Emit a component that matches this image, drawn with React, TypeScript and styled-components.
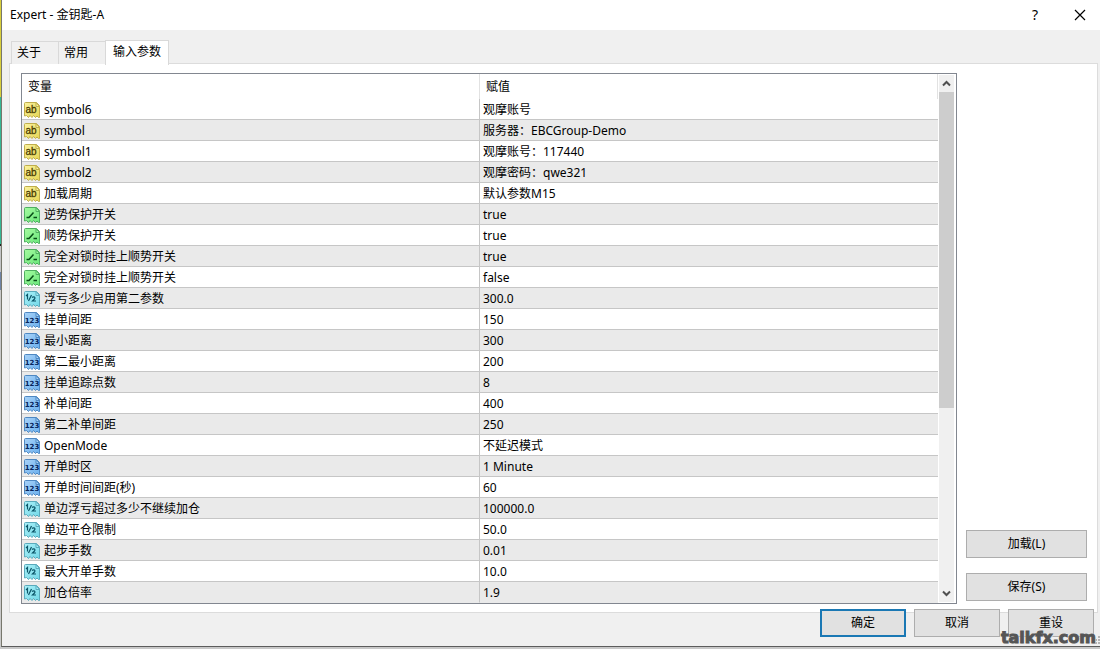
import React from 'react';
import styled, { createGlobalStyle, css } from 'styled-components';

const GlobalStyle = createGlobalStyle`
  *, *::before, *::after { box-sizing: border-box; }
  body {
    margin: 0;
    background: #c8c8c8;
    color: #000;
    font: 12px/16px "Noto Sans", "Noto Sans CJK SC", sans-serif;
  }
  button { font: inherit; color: inherit; padding: 0; margin: 0; }
`;

const Screen = styled.div`
  display: flex;
  padding-bottom: 2px;
  overflow: hidden;
`;

const DesktopEdge = styled.div`
  flex: none;
  width: 1px;
  background: linear-gradient(#d9cf3c 0 97px, #35b795 97px 244px, #222 244px 246px, #c3c4c6 246px 272px, #6f83a6 272px 290px, #c9c9c9 290px 430px, #a8a8a8 430px 570px, #c9c9c9 570px);
`;

const Dialog = styled.main`
  position: relative;
  flex: 1;
  min-width: 0;
  background: #f0f0f0;
  border-left: 1px solid #77776c;
  border-bottom: 1px solid #5c5c5c;
`;

const TitleBar = styled.header`
  display: flex;
  align-items: center;
  height: 30px;
  padding: 0 12px 0 8px;
  background: #fff;
`;

const Title = styled.h1`
  flex: 1;
  margin: 0;
  font-size: 12px;
  font-weight: 400;
`;

const CaptionButton = styled.button`
  display: flex;
  align-items: center;
  justify-content: center;
  width: 16px;
  height: 28px;
  margin-left: 29px;
  border: 0;
  background: none;
  font-size: 14px;
`;

const TabList = styled.div`
  display: flex;
  align-items: flex-end;
  height: 34px;
  padding-left: 9px;
`;

const Tab = styled.button<{ $active?: boolean }>`
  height: 23px;
  width: 47px;
  padding-left: 5px;
  text-align: left;
  background: #f0f0f0;
  border: 1px solid #d9d9d9;
  border-right: 0;
  border-bottom: 0;
  ${({ $active }) =>
    $active &&
    css`
      position: relative;
      z-index: 1;
      width: 64px;
      height: 25px;
      margin-bottom: -1px;
      padding-left: 7px;
      padding-bottom: 2px;
      background: #fff;
      border-right: 1px solid #d9d9d9;
    `}
`;

const Panel = styled.section`
  display: flex;
  gap: 9px;
  margin: -1px 2px 0 7px;
  padding: 9px 10px 8px 11px;
  background: #fff;
  border: 1px solid #dcdcdc;
`;

const ListBox = styled.div`
  display: flex;
  flex: 1;
  min-width: 0;
  border: 1px solid #828790;
`;

const ParamTable = styled.table`
  flex: 1;
  table-layout: fixed;
  border-collapse: separate;
  border-spacing: 0;
`;

const HeadCell = styled.th`
  width: 50%;
  height: 25px;
  padding: 0 6px;
  text-align: left;
  font-weight: 400;
  border-right: 1px solid #e2e2e2;
`;

const Row = styled.tr`
  background: #fff;
  &:nth-child(even) { background: #eaeaea; }
`;

const Cell = styled.td`
  height: 21px;
  padding: 2px 3px 0;
  border-bottom: 1px solid #c6c6c6;
  white-space: nowrap;
  overflow: hidden;
  &:first-child {
    padding-left: 2px;
    border-right: 1px solid #c6c6c6;
  }
  ${Row}:last-child & { border-bottom-color: #eaeaea; }
`;

const NameCell = styled.div`
  display: flex;
  align-items: center;
  gap: 3px;
`;

const ScrollBar = styled.div`
  display: flex;
  flex-direction: column;
  flex: none;
  width: 15px;
  margin: 1px 2px 1px 1px;
  background: #f0f0f0;
`;

const ScrollArrow = styled.button`
  display: flex;
  align-items: center;
  justify-content: center;
  flex: none;
  height: 17px;
  border: 0;
  background: none;
`;

const ScrollTrack = styled.div`
  flex: 1;
`;

const ScrollThumb = styled.div`
  height: 64%;
  background: #cdcdcd;
`;

const SideButtons = styled.div`
  display: flex;
  flex-direction: column;
  justify-content: flex-end;
  gap: 15px;
  width: 121px;
  padding-bottom: 3px;
`;

const PushButton = styled.button<{ $primary?: boolean }>`
  height: 28px;
  background: #e1e1e1;
  border: ${({ $primary }) => ($primary ? '2px solid #1a78b4' : '1px solid #adadad')};
`;

const Footer = styled.footer`
  position: relative;
  display: grid;
  grid-template-columns: repeat(3, 86px);
  justify-content: end;
  gap: 8px;
  margin-top: -4px;
  padding: 0 6px 9px 0;
`;

const Watermark = styled.div`
  position: absolute;
  right: 4px;
  bottom: 0;
  font: 700 16px/16px "DejaVu Sans", sans-serif;
  color: #555;
  -webkit-text-stroke: 1px #555;
  text-shadow: 0 0 2px #fff, 1px 1px 1px #ddd;
`;

const Grip = styled.svg`
  position: absolute;
  right: 0;
  bottom: 1px;
`;

type Kind = 'text' | 'bool' | 'real' | 'int';

const palette: Record<Kind, { light: string; mid: string; edge: string; ink: string }> = {
  text: { light: '#fbf3a0', mid: '#e6d654', edge: '#bfae4c', ink: '#4a3c00' },
  bool: { light: '#a5fba0', mid: '#6ae67a', edge: '#4fae60', ink: '#064d16' },
  real: { light: '#a9f0f8', mid: '#74d8e8', edge: '#5aaabc', ink: '#0b5568' },
  int: { light: '#a8d2f8', mid: '#6cb0ee', edge: '#4f88c2', ink: '#06245c' },
};

function IconDefs() {
  return (
    <defs>
      {(Object.keys(palette) as Kind[]).map((k) => (
        <linearGradient key={k} id={`fill-${k}`} x1="0" y1="0" x2="1" y2="1">
          <stop offset="0" stopColor={palette[k].light} />
          <stop offset="1" stopColor={palette[k].mid} />
        </linearGradient>
      ))}
    </defs>
  );
}

function KindIcon({ kind }: { kind: Kind }) {
  const c = palette[kind];
  return (
    <svg width="17" height="17" viewBox="0 0 17 17" aria-hidden="true">
      <path
        d="M.5 1.5Q.5 .5 1.5 .5H12.5L15.5 3.5V15.5H14.5L13 14L11.5 15.5L9.5 13.5L8 15.5L6 13.5L4.5 15.5L2.5 13.5L.5 14Z"
        fill={`url(#fill-${kind})`}
        stroke={c.edge}
      />
      <path d="M12 .5V4.5H15.5Z" fill={c.light} stroke={c.edge} />
      {kind === 'bool' && (
        <path d="M2.5 10.5H5L9.5 5.5M9.5 10.5H13" fill="none" stroke={c.ink} strokeWidth="1.5" />
      )}
      {kind === 'real' && (
        <path
          d="M2 5L3.5 3.5V8.5M4.5 10L7.5 4M8 6.5Q9 5.5 10.5 6Q11.5 7 10.5 8L8.5 10H12"
          fill="none"
          stroke={c.ink}
          strokeWidth="1.2"
        />
      )}
      {kind === 'text' && (
        <text x="7" y="11" textAnchor="middle" fill={c.ink} stroke={c.ink} strokeWidth=".3" fontFamily="Liberation Sans, sans-serif" fontSize="10">
          ab
        </text>
      )}
      {kind === 'int' && (
        <text x="8" y="11" textAnchor="middle" fill={c.ink} fontFamily="DejaVu Sans, sans-serif" fontWeight="700" fontSize="7">
          123
        </text>
      )}
    </svg>
  );
}

const params: [Kind, string, string][] = [
  ['text', 'symbol6', '观摩账号'],
  ['text', 'symbol', '服务器：EBCGroup-Demo'],
  ['text', 'symbol1', '观摩账号：117440'],
  ['text', 'symbol2', '观摩密码：qwe321'],
  ['text', '加载周期', '默认参数M15'],
  ['bool', '逆势保护开关', 'true'],
  ['bool', '顺势保护开关', 'true'],
  ['bool', '完全对锁时挂上顺势开关', 'true'],
  ['bool', '完全对锁时挂上顺势开关', 'false'],
  ['real', '浮亏多少启用第二参数', '300.0'],
  ['int', '挂单间距', '150'],
  ['int', '最小距离', '300'],
  ['int', '第二最小距离', '200'],
  ['int', '挂单追踪点数', '8'],
  ['int', '补单间距', '400'],
  ['int', '第二补单间距', '250'],
  ['int', 'OpenMode', '不延迟模式'],
  ['int', '开单时区', '1 Minute'],
  ['int', '开单时间间距(秒)', '60'],
  ['real', '单边浮亏超过多少不继续加仓', '100000.0'],
  ['real', '单边平仓限制', '50.0'],
  ['real', '起步手数', '0.01'],
  ['real', '最大开单手数', '10.0'],
  ['real', '加仓倍率', '1.9'],
];

export default function App() {
  return (
    <Screen lang="zh-CN">
      <GlobalStyle />
      <DesktopEdge />
      <Dialog>
        <TitleBar>
          <Title>Expert - 金钥匙-A</Title>
          <CaptionButton aria-label="帮助">?</CaptionButton>
          <CaptionButton aria-label="关闭">
            <svg width="12" height="12" viewBox="0 0 12 12" aria-hidden="true">
              <path d="M1 1L11 11M11 1L1 11" stroke="#000" strokeWidth="1.2" />
            </svg>
          </CaptionButton>
        </TitleBar>
        <TabList role="tablist">
          <Tab role="tab" aria-selected={false}>关于</Tab>
          <Tab role="tab" aria-selected={false}>常用</Tab>
          <Tab role="tab" aria-selected $active>输入参数</Tab>
        </TabList>
        <Panel role="tabpanel">
          <ListBox>
            <ParamTable>
              <thead>
                <tr>
                  <HeadCell scope="col">变量</HeadCell>
                  <HeadCell scope="col">赋值</HeadCell>
                </tr>
              </thead>
              <tbody>
                {params.map(([kind, name, value], i) => (
                  <Row key={i}>
                    <Cell>
                      <NameCell>
                        <KindIcon kind={kind} />
                        {name}
                      </NameCell>
                    </Cell>
                    <Cell>{value}</Cell>
                  </Row>
                ))}
              </tbody>
            </ParamTable>
            <ScrollBar>
              <ScrollArrow aria-label="向上滚动">
                <svg width="9" height="7" viewBox="0 0 9 7" aria-hidden="true">
                  <path d="M1 5.5L4.5 2L8 5.5" fill="none" stroke="#505050" strokeWidth="2" />
                </svg>
              </ScrollArrow>
              <ScrollTrack>
                <ScrollThumb />
              </ScrollTrack>
              <ScrollArrow aria-label="向下滚动">
                <svg width="9" height="7" viewBox="0 0 9 7" aria-hidden="true">
                  <path d="M1 1.5L4.5 5L8 1.5" fill="none" stroke="#505050" strokeWidth="2" />
                </svg>
              </ScrollArrow>
            </ScrollBar>
          </ListBox>
          <SideButtons>
            <PushButton>加载(L)</PushButton>
            <PushButton>保存(S)</PushButton>
          </SideButtons>
        </Panel>
        <Footer>
          <PushButton $primary>确定</PushButton>
          <PushButton>取消</PushButton>
          <PushButton>重设</PushButton>
        </Footer>
        <Watermark>talkfx.com</Watermark>
        <Grip width="5" height="9" viewBox="0 0 5 9" aria-hidden="true">
          <IconDefs />
          <path d="M3 0h2v2h-2zM0 3h2v2h-2zM3 3h2v2h-2zM0 6h2v2h-2zM3 6h2v2h-2z" fill="#b4b4b4" />
        </Grip>
      </Dialog>
    </Screen>
  );
}
